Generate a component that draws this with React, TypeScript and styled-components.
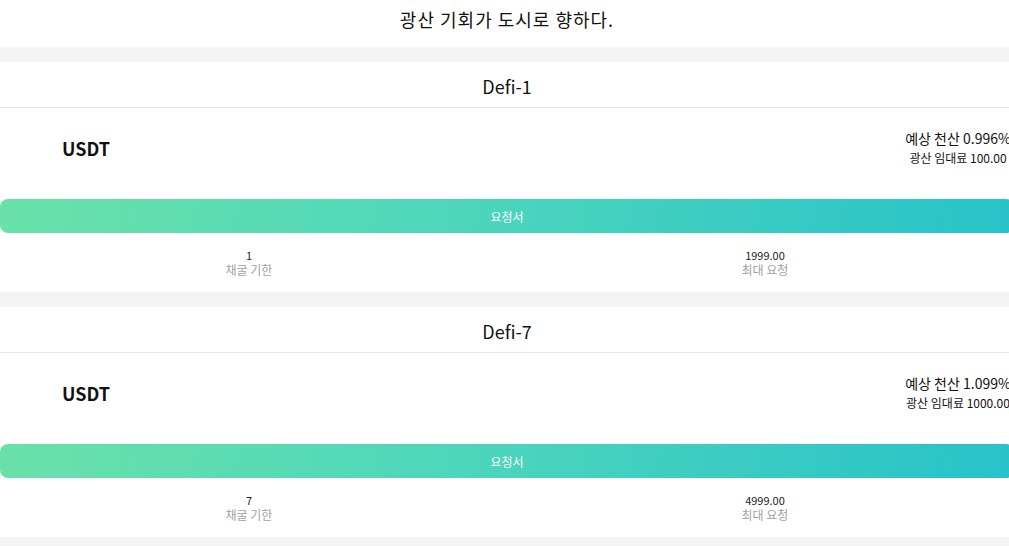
import React from "react";
import styled, { createGlobalStyle } from "styled-components";

const Global = createGlobalStyle`
  html, body { margin: 0; padding: 0; background: #fff; overflow: hidden; }
  body { font-family: "Noto Sans CJK KR", "Noto Sans", sans-serif; color: #111; }
`;

const Page = styled.div`
  width: 1014px;
  background: #f4f4f4;
  display: flex;
  flex-direction: column;
  gap: 15px;
  padding-bottom: 15px;
`;

const Title = styled.h1`
  margin: 0;
  background: #fff;
  font-size: 18px;
  font-weight: 400;
  letter-spacing: 1px;
  line-height: 26px;
  padding: 6px 0 15px;
  text-align: center;
`;

const Card = styled.section`
  background: #fff;
  display: flex;
  flex-direction: column;
`;

const CardHeader = styled.div`
  padding: 12px 0 9px;
  line-height: 24px;
  font-size: 18px;
  text-align: center;
  border-bottom: 1px solid #e6e6ec;
`;

const InfoRow = styled.div`
  height: 79px;
  padding-bottom: 4px;
  display: flex;
  align-items: center;
  justify-content: space-between;
  padding-left: 62px;
  padding-right: 6px;
`;

const Coin = styled.div`
  font-size: 18px;
  font-weight: 700;
`;

const Rates = styled.div`
  width: 100px;
  display: flex;
  flex-direction: column;
  align-items: center;
  white-space: nowrap;
`;

const RateLine = styled.div<{ $size: number }>`
  font-size: ${(p) => p.$size}px;
  line-height: 20px;
`;

const ApplyButton = styled.button`
  margin-top: 8px;
  height: 34px;
  border: 0;
  border-radius: 8px;
  background: linear-gradient(100deg, #6ae1a9 0%, #4dd6bb 45%, #27c2c9 100%);
  color: #fff;
  font-family: inherit;
  font-size: 12px;
  cursor: pointer;
`;

const Stats = styled.div`
  display: grid;
  grid-template-columns: 1fr 1fr;
  column-gap: 18px;
  padding: 15px 0 15px;
`;

const Stat = styled.div`
  display: flex;
  flex-direction: column;
  align-items: center;
`;

const StatValue = styled.div`
  font-size: 11px;
  line-height: 14px;
  color: #222;
`;

const StatLabel = styled.div`
  font-size: 12px;
  line-height: 15px;
  color: #a0a0aa;
`;

type Plan = {
  name: string;
  coin: string;
  yieldRate: string;
  rent: string;
  term: string;
  max: string;
};

const plans: Plan[] = [
  { name: "Defi-1", coin: "USDT", yieldRate: "0.996%", rent: "100.00", term: "1", max: "1999.00" },
  { name: "Defi-7", coin: "USDT", yieldRate: "1.099%", rent: "1000.00", term: "7", max: "4999.00" },
];

export default function App() {
  return (
    <>
      <Global />
      <Page>
        <Title>광산 기회가 도시로 향하다.</Title>
        {plans.map((p) => (
          <Card key={p.name}>
            <CardHeader>{p.name}</CardHeader>
            <InfoRow>
              <Coin>{p.coin}</Coin>
              <Rates>
                <RateLine $size={14}>예상 천산 {p.yieldRate}</RateLine>
                <RateLine $size={12}>광산 임대료 {p.rent}</RateLine>
              </Rates>
            </InfoRow>
            <ApplyButton>요청서</ApplyButton>
            <Stats>
              <Stat>
                <StatValue>{p.term}</StatValue>
                <StatLabel>채굴 기한</StatLabel>
              </Stat>
              <Stat>
                <StatValue>{p.max}</StatValue>
                <StatLabel>최대 요청</StatLabel>
              </Stat>
            </Stats>
          </Card>
        ))}
      </Page>
    </>
  );
}
